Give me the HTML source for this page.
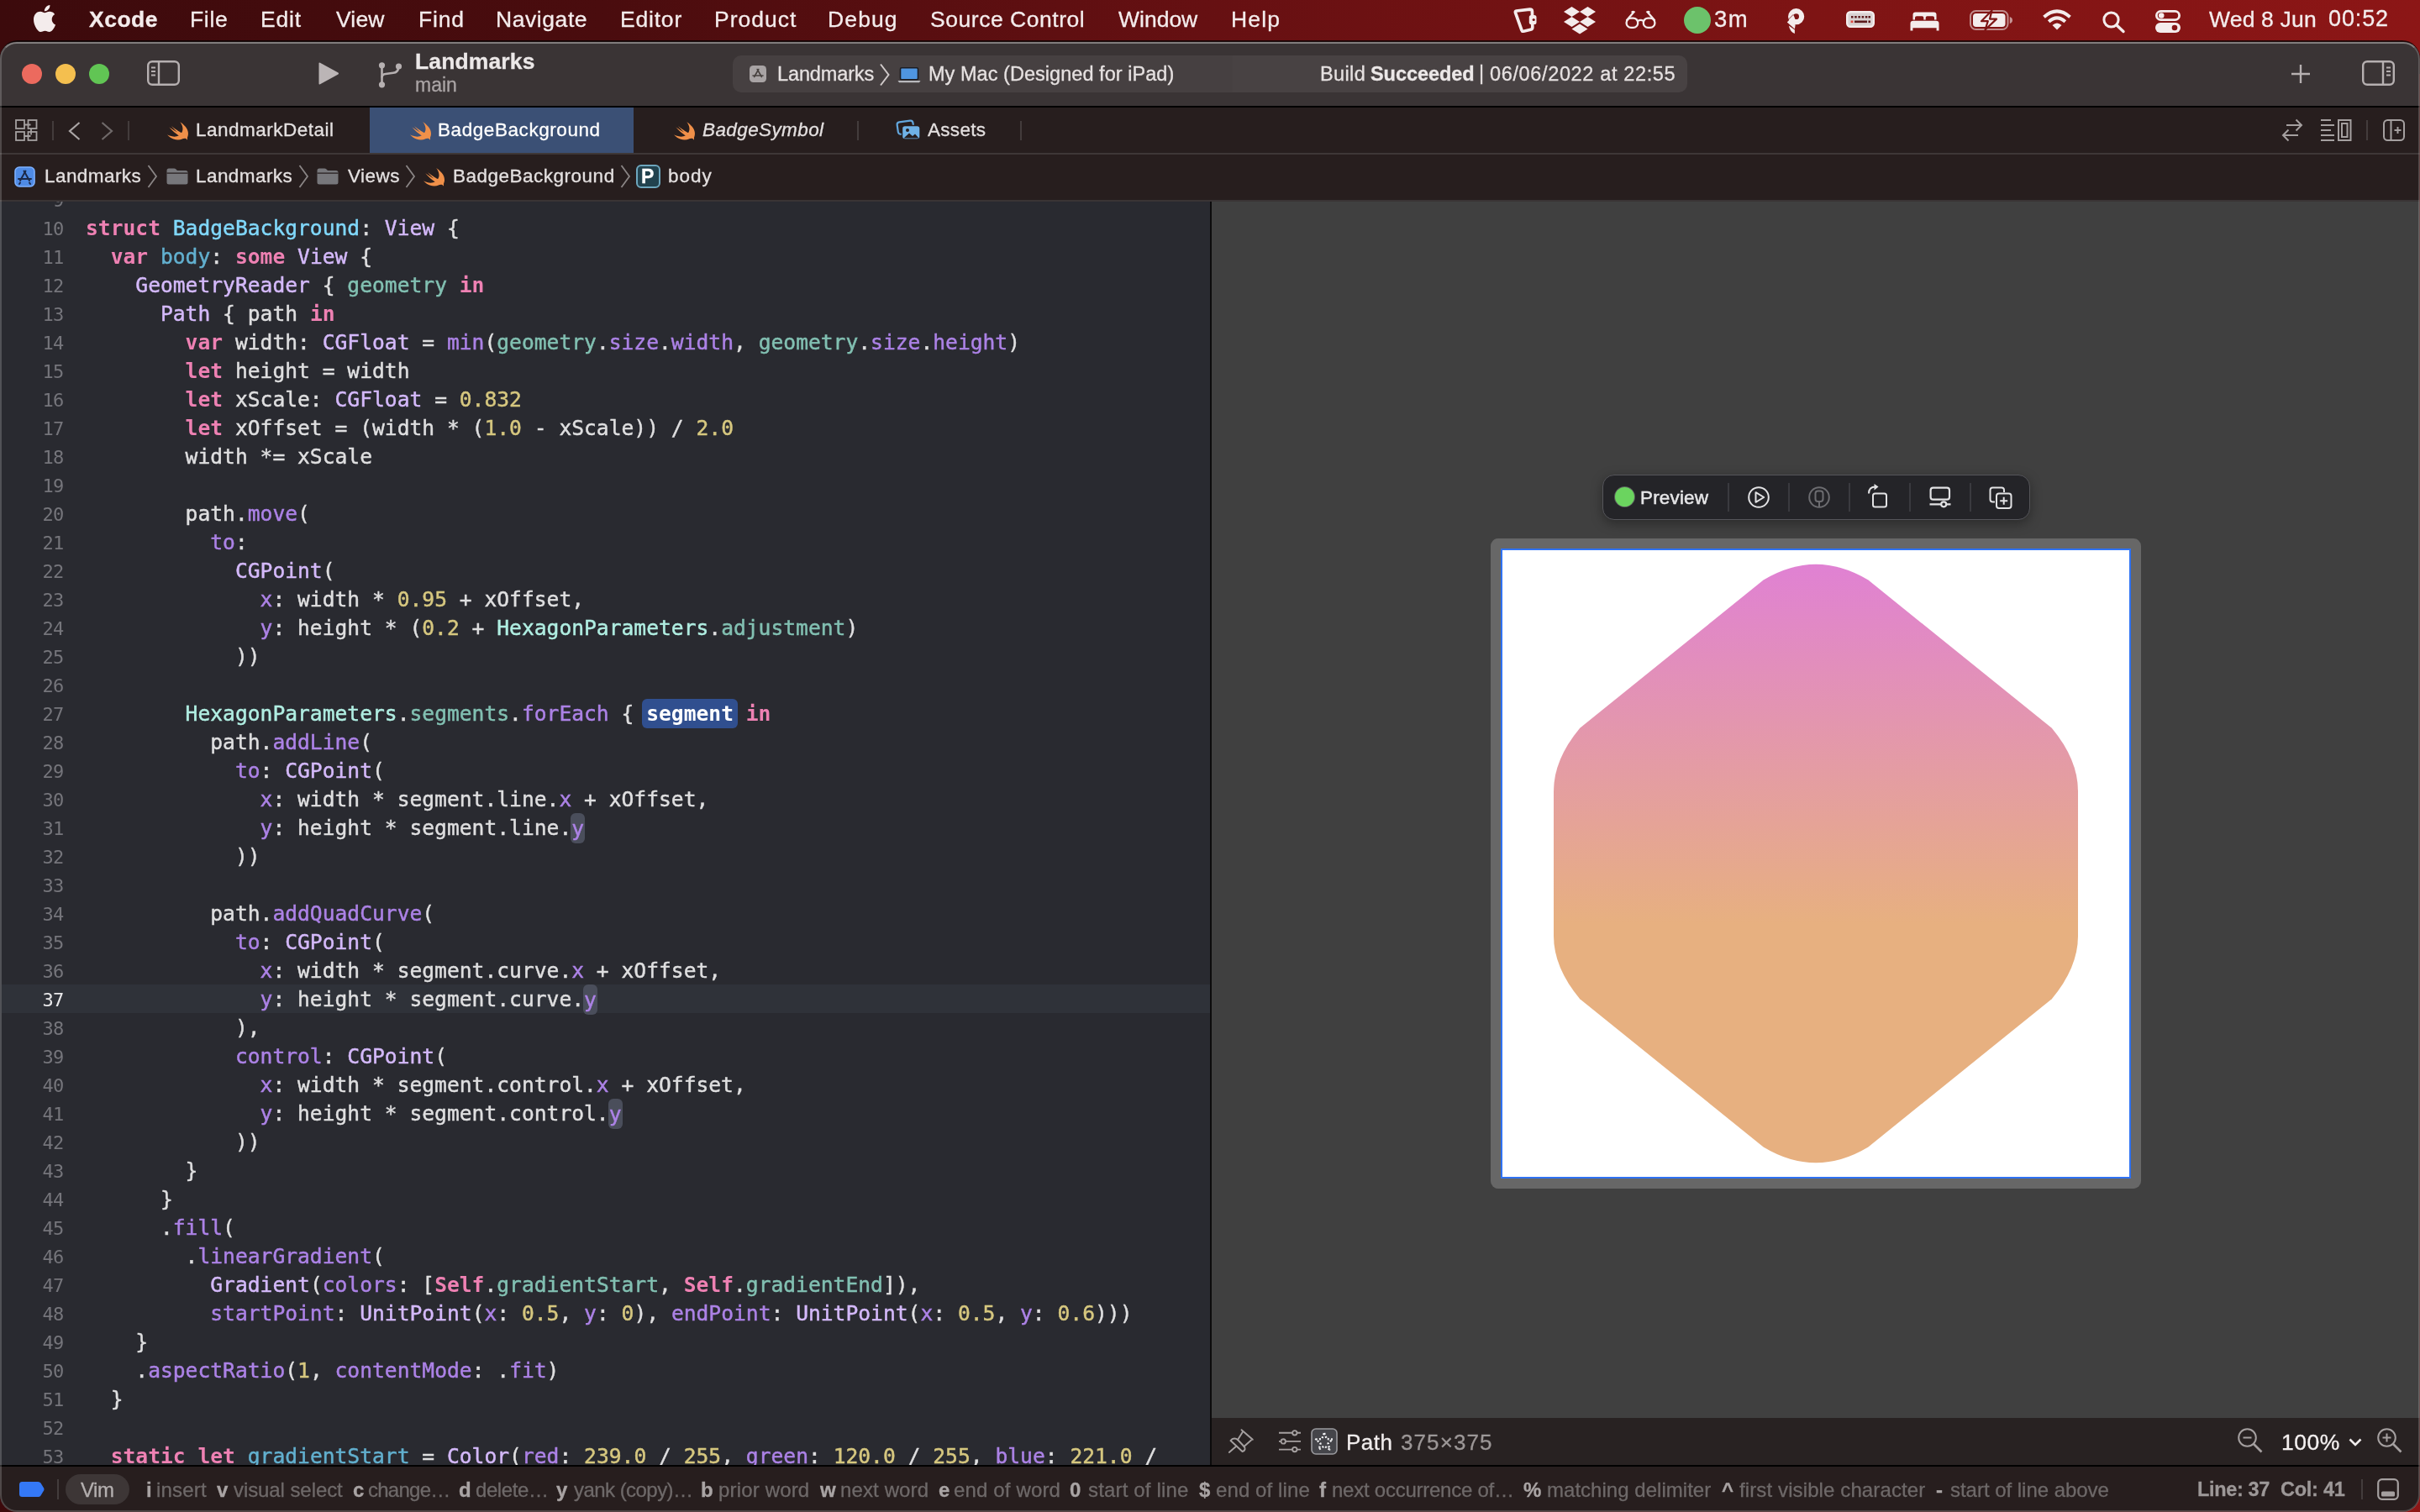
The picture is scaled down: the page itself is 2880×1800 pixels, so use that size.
<!DOCTYPE html>
<html lang="en"><head><meta charset="utf-8"><title>Xcode — BadgeBackground.swift</title>
<style>
html,body{margin:0;padding:0}
body{width:2880px;height:1800px;overflow:hidden;position:relative;font-family:"Liberation Sans", "DejaVu Sans", sans-serif;
 background:linear-gradient(90deg,#3c0a0c 0%,#4a0c0e 25%,#661012 50%,#7e1414 75%,#8c1616 100%);-webkit-font-smoothing:antialiased}
.t{position:absolute;white-space:pre;display:block;will-change:transform;-webkit-text-stroke:0.3px}
.abs{position:absolute}
svg{position:absolute;overflow:visible}
#win{position:absolute;left:0;top:0;width:2880px;height:1800px;clip-path:inset(49.5px 0.5px 0.5px 0px round 20px);background:#271e1e}
#winborder{position:absolute;left:0;top:49.5px;width:2879.5px;height:1750px;border-radius:20px;box-sizing:border-box;border:2px solid rgba(255,255,255,.19);border-top-color:rgba(255,255,255,.36);pointer-events:none}
.code{position:absolute;left:102px;top:254px;font-family:"DejaVu Sans Mono", "Liberation Mono", monospace;font-size:24.63px;line-height:34px;color:#dfdfe0;white-space:pre;-webkit-text-stroke:0.45px;will-change:transform}
.code b{font-weight:700;-webkit-text-stroke:0}
.ln{position:absolute;left:0;width:75.5px;text-align:right;top:254px;font-family:"DejaVu Sans Mono", "Liberation Mono", monospace;font-size:22px;line-height:34px;color:#75757b;white-space:pre;will-change:transform;letter-spacing:-0.7px}
.k{color:#ee81b3}.td{color:#80d8fb}.od{color:#62b0cf}.st{color:#d4b9fa}.sf{color:#ac82e6}.pt{color:#b0eee2}.pp{color:#82c0b2}.n{color:#d6c77f}
</style></head>
<body>
<div id="menubar" class="abs" style="left:0;top:0;width:2880px;height:48px">
<svg style="left:40px;top:6px" width="26" height="32" viewBox="0 0 814 1000"><path fill="#f4ecec" d="M788.1 340.9c-5.8 4.5-108.2 62.2-108.2 190.5 0 148.4 130.3 200.9 134.2 202.200-.6 3.200-20.700 71.900-68.700 141.900-42.800 61.600-87.500 123.100-155.500 123.100s-85.500-39.500-164-39.500c-76.500 0-103.700 40.800-165.900 40.800s-105.600-57-155.500-127C46.700 790.700 0 663 0 541.800c0-194.400 126.400-297.500 250.800-297.500 66.100 0 121.200 43.400 162.700 43.400 39.500 0 101.100-46 176.300-46 28.500 0 130.900 2.600 198.300 99.200zm-234-181.500c31.100-36.900 53.100-88.100 53.100-139.300 0-7.100-.6-14.300-1.900-20.100-50.600 1.900-110.800 33.700-147.100 75.800-28.500 32.400-55.100 83.600-55.100 135.500 0 7.800 1.300 15.600 1.900 18.100 3.200.6 8.400 1.300 13.600 1.300 45.400 0 102.500-30.400 135.500-71.300z"/></svg>
<span id="m_xcode" class="t" style="left:106.0px;top:9.6px;font-size:26.5px;line-height:26.5px;color:#f4ecec;font-weight:700;letter-spacing:0.500px;">Xcode</span>
<span id="m_file" class="t" style="left:226.0px;top:9.6px;font-size:26.5px;line-height:26.5px;color:#f4ecec;font-weight:400;letter-spacing:0.667px;">File</span>
<span id="m_edit" class="t" style="left:310.0px;top:9.6px;font-size:26.5px;line-height:26.5px;color:#f4ecec;font-weight:400;letter-spacing:0.833px;">Edit</span>
<span id="m_view" class="t" style="left:400.0px;top:9.6px;font-size:26.5px;line-height:26.5px;color:#f4ecec;font-weight:400;letter-spacing:0.167px;">View</span>
<span id="m_find" class="t" style="left:498.0px;top:9.6px;font-size:26.5px;line-height:26.5px;color:#f4ecec;font-weight:400;letter-spacing:0.833px;">Find</span>
<span id="m_nav" class="t" style="left:590.0px;top:9.6px;font-size:26.5px;line-height:26.5px;color:#f4ecec;font-weight:400;letter-spacing:0.571px;">Navigate</span>
<span id="m_editor" class="t" style="left:738.0px;top:9.6px;font-size:26.5px;line-height:26.5px;color:#f4ecec;font-weight:400;letter-spacing:0.800px;">Editor</span>
<span id="m_product" class="t" style="left:850.0px;top:9.6px;font-size:26.5px;line-height:26.5px;color:#f4ecec;font-weight:400;letter-spacing:1.000px;">Product</span>
<span id="m_debug" class="t" style="left:985.0px;top:9.6px;font-size:26.5px;line-height:26.5px;color:#f4ecec;font-weight:400;letter-spacing:1.125px;">Debug</span>
<span id="m_sc" class="t" style="left:1107.0px;top:9.6px;font-size:26.5px;line-height:26.5px;color:#f4ecec;font-weight:400;letter-spacing:0.538px;">Source Control</span>
<span id="m_window" class="t" style="left:1331.0px;top:9.6px;font-size:26.5px;line-height:26.5px;color:#f4ecec;font-weight:400;letter-spacing:0.000px;">Window</span>
<span id="m_help" class="t" style="left:1465.0px;top:9.6px;font-size:26.5px;line-height:26.5px;color:#f4ecec;font-weight:400;letter-spacing:1.167px;">Help</span>
<svg style="left:1800px;top:7px" width="30" height="34" viewBox="0 0 30 34"><path fill="none" stroke="#f4ecec" stroke-width="3.700" stroke-linejoin="round" d="M4.600 6 L20.500 4.100 Q23.300 4 23.400 6.500 L23.800 25.500 Q23.800 27.800 21.500 28.300 L13.200 30.200 Q11.500 30.500 10.900 28.800 L3.500 8.200 Q3 6.300 4.600 6Z"/><rect x="19.800" y="11" width="8.700" height="11" rx="2.600" fill="#f4ecec"/><circle cx="25.200" cy="16.500" r="1.600" fill="#761314"/></svg>
<svg style="left:1861px;top:8px" width="38" height="33" viewBox="0 0 38 33"><g fill="#f4ecec"><path d="M9.500 0 L19 6 L9.500 12 L0 6Z"/><path d="M28.500 0 L38 6 L28.500 12 L19 6Z"/><path d="M9.500 12 L19 18 L9.500 24 L0 18Z"/><path d="M28.500 12 L38 18 L28.500 24 L19 18Z"/><path d="M19 20.500 L28.500 26.500 L19 32.500 L9.500 26.500Z"/></g></svg>
<svg style="left:1933px;top:12px" width="38" height="24" viewBox="0 0 38 24"><g fill="none" stroke="#f4ecec" stroke-width="2.300" stroke-linecap="round"><rect x="2.600" y="9.600" width="13.600" height="11.200" rx="5.400"/><rect x="22.800" y="9.600" width="13.600" height="11.200" rx="5.400"/><path d="M16.200 13 Q19.500 10.800 22.800 13"/><path d="M3 12 L11.500 2.200 Q10.500 1.600 9.500 2.300"/><path d="M36 12 L27.500 2.200 Q28.500 1.600 29.500 2.300"/></g></svg>
<div class="abs" style="left:2004px;top:8px;width:32px;height:32px;border-radius:50%;background:#6cc26b"></div>
<span id="m_3m" class="t" style="left:2040.0px;top:8.7px;font-size:27.5px;line-height:27.5px;color:#f4ecec;font-weight:400;letter-spacing:1.500px;">3m</span>
<svg style="left:2126px;top:8px" width="28" height="34" viewBox="0 0 28 34"><circle cx="11.600" cy="11.700" r="6.500" fill="none" stroke="#f4ecec" stroke-width="6.200"/><path fill="#f4ecec" d="M0.800 18.400 L8.600 10.200 L10.500 15 L10.500 22.500 L9.900 26.500Z"/><path fill="#f4ecec" d="M2.800 22.600 L9.900 27.600 L9.900 32 Q4.500 30.500 2.800 22.600Z"/><path d="M8.300 9.200 L1.600 16" stroke="#7a1314" stroke-width="0.800" fill="none"/></svg>
<svg style="left:2197px;top:13px" width="34" height="20" viewBox="0 0 34 20"><rect x="1.200" y="1.200" width="31.600" height="17.600" rx="4" fill="#d9d2d2" stroke="#f4ecec" stroke-width="2.400"/><g fill="#5b1a1c"><rect x="6" y="6" width="2.500" height="2.500"/><rect x="10.200" y="6" width="2.500" height="2.500"/><rect x="14.400" y="6" width="2.500" height="2.500"/><rect x="18.600" y="6" width="2.500" height="2.500"/><rect x="22.800" y="6" width="2.500" height="2.500"/><rect x="26.500" y="6" width="2.500" height="2.500"/><rect x="10" y="11.500" width="15" height="2.600"/><rect x="26.500" y="11.500" width="2.500" height="2.600"/></g><rect x="5.600" y="11.500" width="2.800" height="2.600" fill="#e0483e"/></svg>
<svg style="left:2273px;top:14px" width="35" height="23" viewBox="0 0 35 23"><path fill="#f4ecec" d="M3.500 9.500 L3.500 3.500 Q3.500 0.500 6.500 0.500 L28.500 0.500 Q31.500 0.500 31.500 3.500 L31.500 9.500 L29 9.500 L29 7 Q29 5.200 27 5.200 L20.500 5.200 Q18.700 5.200 18.700 7 L18.700 9.500 L16.300 9.500 L16.300 7 Q16.300 5.200 14.500 5.200 L8 5.200 Q6 5.200 6 7 L6 9.500Z M0.500 22.500 L0.500 14 Q0.500 10.800 4 10.800 L31 10.800 Q34.500 10.800 34.500 14 L34.500 22.500 L31.600 22.500 L31.600 19.300 L3.400 19.300 L3.400 22.500Z"/></svg>
<svg style="left:2344px;top:12px" width="53" height="24" viewBox="0 0 53 24"><rect x="1" y="1" width="44.500" height="22" rx="6.500" fill="none" stroke="#f4ecec" stroke-opacity=".55" stroke-width="2"/><rect x="4" y="4" width="38.500" height="16" rx="3.800" fill="#f4ecec"/><path d="M47.800 8 Q51 9 51 12 Q51 15 47.800 16Z" fill="#f4ecec" fill-opacity=".6"/><path d="M26.500 0.500 L14 13.200 L21.800 13.200 L18.500 23.500 L32 10.600 L24 10.600Z" fill="#f4ecec" stroke="#7d1515" stroke-width="2.200" stroke-linejoin="round"/></svg>
<svg style="left:2430px;top:11px" width="36" height="25" viewBox="0 0 36 25"><g fill="none" stroke="#f4ecec" stroke-width="4" stroke-linecap="butt"><path d="M2.500 9.200 Q18 -4.500 33.500 9.200"/><path d="M8.200 14.800 Q18 6 27.800 14.800"/></g><path d="M18 24.500 L12.500 19 Q18 14 23.500 19Z" fill="#f4ecec"/></svg>
<svg style="left:2502px;top:13px" width="27" height="26" viewBox="0 0 27 26"><circle cx="10.500" cy="10.500" r="8.600" fill="none" stroke="#f4ecec" stroke-width="3"/><path d="M16.800 16.800 L25 24.500" stroke="#f4ecec" stroke-width="3.400" stroke-linecap="round"/></svg>
<svg style="left:2565px;top:12px" width="30" height="27" viewBox="0 0 30 27"><rect x="1.400" y="1.400" width="27.200" height="10.200" rx="5.100" fill="none" stroke="#f4ecec" stroke-width="2.800"/><circle cx="7.200" cy="6.500" r="3.300" fill="#f4ecec"/><rect x="0" y="15" width="30" height="12" rx="6" fill="#f4ecec"/><circle cx="23" cy="21" r="3.300" fill="#861516"/></svg>
<span id="m_date" class="t" style="left:2629.0px;top:9.6px;font-size:26.5px;line-height:26.5px;color:#f4ecec;font-weight:400;letter-spacing:0.188px;">Wed 8 Jun</span>
<span id="m_time" class="t" style="left:2771.0px;top:9.1px;font-size:27px;line-height:27px;color:#f4ecec;font-weight:400;letter-spacing:0.875px;">00:52</span>
</div>
<div id="shadow" class="abs" style="left:0;top:48px;width:2880px;height:40px;background:rgba(0,0,0,.72);border-radius:21px 21px 0 0"></div>
<div id="win">
<div id="toolbar" class="abs" style="left:0;top:50px;width:2880px;height:76px;background:#3a3435"></div>
<div class="abs" style="left:0;top:126px;width:2880px;height:2px;background:#000"></div>
<div class="abs" style="left:26px;top:76px;width:24px;height:24px;border-radius:50%;background:#ec6a5e"></div>
<div class="abs" style="left:66px;top:76px;width:24px;height:24px;border-radius:50%;background:#f4bf4f"></div>
<div class="abs" style="left:106px;top:76px;width:24px;height:24px;border-radius:50%;background:#61c554"></div>
<svg style="left:175px;top:72px" width="39" height="30" viewBox="0 0 39 30"><rect x="1.200" y="1.200" width="36.600" height="27.600" rx="5" fill="none" stroke="#b6b0b1" stroke-width="2.400"/><path d="M14 1.200 V28.800" stroke="#b6b0b1" stroke-width="2.400"/><path d="M5 8.500 H10 M5 13 H10 M5 17.500 H10" stroke="#b6b0b1" stroke-width="1.800"/></svg>
<svg style="left:377px;top:73px" width="28" height="29" viewBox="0 0 28 29"><path d="M2.500 2.500 L2.500 26.500 Q2.500 28 4 27.200 L25.500 15.500 Q26.800 14.500 25.500 13.600 L4 1.800 Q2.500 1 2.500 2.500Z" fill="#bbb5b6"/></svg>
<svg style="left:448.500px;top:72.500px" width="32" height="33" viewBox="0 0 32 33"><g fill="none" stroke="#b6b0b1" stroke-width="2.600"><path d="M5.500 7.500 V25"/><path d="M5.500 19.500 Q5.500 15.500 10 15 L19 13.800 Q24.500 13 25 8.500"/></g><circle cx="5.500" cy="4.800" r="3.600" fill="#b6b0b1"/><circle cx="5.500" cy="27.800" r="3.600" fill="#b6b0b1"/><circle cx="25.500" cy="6" r="3.600" fill="#b6b0b1"/></svg>
<span id="tb_title" class="t" style="left:494.0px;top:59.6px;font-size:26.5px;line-height:26.5px;color:#ece8e8;font-weight:700;letter-spacing:0.125px;">Landmarks</span>
<span id="tb_branch" class="t" style="left:493.5px;top:90.0px;font-size:23px;line-height:23px;color:#aaa4a5;font-weight:400;letter-spacing:0.000px;">main</span>
<div class="abs" style="left:872px;top:66px;width:595px;height:44px;border-radius:10px 0 0 10px;background:#464041"></div>
<div class="abs" style="left:1467px;top:66px;width:541px;height:44px;border-radius:0 10px 10px 0;background:#484243"></div>
<svg style="left:892px;top:78px" width="20" height="20" viewBox="0 0 20 20"><rect width="20" height="20" rx="4.500" fill="#a8a3a4"/><g stroke="#47413f" stroke-width="1.600" stroke-linecap="round" fill="none"><path d="M10.800 4.500 L5.600 13.500"/><path d="M9.200 4.500 L14.400 13.500"/><path d="M4 12 H16"/></g></svg>
<span id="tb_scheme" class="t" style="left:925.0px;top:77.1px;font-size:23.5px;line-height:23.5px;color:#e6e1e1;font-weight:400;letter-spacing:-0.125px;">Landmarks</span>
<svg style="left:1046px;top:75px" width="14" height="28" viewBox="0 0 14 28"><path d="M2 1.500 L11.500 14 L2 26.500" fill="none" stroke="#d0caca" stroke-width="2"/></svg>
<svg style="left:1068px;top:80px" width="28" height="19" viewBox="0 0 28 19"><rect x="3.500" y="0.800" width="21" height="14" rx="1.500" fill="#4f95e0" stroke="#1d1d22" stroke-width="1.600"/><path d="M0.500 16 H27.500 L26 18.200 H2Z" fill="#b9b9bd"/></svg>
<span id="tb_dest" class="t" style="left:1105.0px;top:77.1px;font-size:23.5px;line-height:23.5px;color:#e6e1e1;font-weight:400;letter-spacing:0.040px;">My Mac (Designed for iPad)</span>
<span id="tb_build" class="t" style="left:1571.0px;top:77.1px;font-size:23.5px;line-height:23.5px;color:#e6e1e1;font-weight:400;letter-spacing:0.375px;">Build</span>
<span id="tb_succ" class="t" style="left:1631.0px;top:77.1px;font-size:23.5px;line-height:23.5px;color:#ece8e8;font-weight:700;letter-spacing:-0.062px;">Succeeded</span>
<span id="tb_bar" class="t" style="left:1760.0px;top:76.1px;font-size:23.5px;line-height:23.5px;color:#e6e1e1;font-weight:400;letter-spacing:0.000px;">|</span>
<span id="tb_date" class="t" style="left:1773.0px;top:77.1px;font-size:23.5px;line-height:23.5px;color:#e6e1e1;font-weight:400;letter-spacing:0.639px;">06/06/2022 at 22:55</span>
<svg style="left:2726px;top:76px" width="24" height="24" viewBox="0 0 24 24"><path d="M12 1 V23 M1 12 H23" stroke="#b6b0b1" stroke-width="2.400" fill="none"/></svg>
<svg style="left:2811px;top:72px" width="39" height="30" viewBox="0 0 39 30"><rect x="1.200" y="1.200" width="36.600" height="27.600" rx="5" fill="none" stroke="#b6b0b1" stroke-width="2.400"/><path d="M25 1.200 V28.800" stroke="#b6b0b1" stroke-width="2.400"/><path d="M29 8.500 H34 M29 13 H34 M29 17.500 H34" stroke="#b6b0b1" stroke-width="1.800"/></svg>
<div id="tabbar" class="abs" style="left:0;top:128px;width:2880px;height:54px;background:#271e1e"></div>
<div class="abs" style="left:0;top:182px;width:2880px;height:2px;background:#3e3737"></div>
<div id="jumpbar" class="abs" style="left:0;top:184px;width:2880px;height:54px;background:#271e1e"></div>
<div class="abs" style="left:0;top:238px;width:2880px;height:2px;background:#3a3435"></div>
<div class="abs" style="left:440px;top:128px;width:314px;height:54px;background:#3b5075"></div>
<svg style="left:18px;top:142px" width="27" height="26" viewBox="0 0 27 26"><g fill="none" stroke="#a5a0a0" stroke-width="1.800"><rect x="1" y="1" width="10" height="10"/><rect x="15.500" y="1" width="10" height="10"/><rect x="1" y="15" width="10" height="10"/><rect x="15.500" y="15" width="10" height="10"/><path d="M11 6.500 H18.500 M19 11 V18.500 M11 20 H18.500"/></g></svg>
<div class="abs" style="left:62px;top:144px;width:2px;height:23px;background:#433c3c"></div>
<svg style="left:81px;top:145px" width="15" height="22" viewBox="0 0 15 22"><path d="M13.500 1 L2 11 L13.500 21" fill="none" stroke="#aaa5a5" stroke-width="2.200"/></svg>
<svg style="left:120px;top:145px" width="15" height="22" viewBox="0 0 15 22"><path d="M1.500 1 L13 11 L1.500 21" fill="none" stroke="#6f6969" stroke-width="2.200"/></svg>
<div class="abs" style="left:152px;top:144px;width:2px;height:23px;background:#433c3c"></div>
<svg style="left:199px;top:145px" width="25" height="21.5" viewBox="14.300 6.100 33.800 35.300" preserveAspectRatio="none"><path fill="#f09049" d="M46.600 37.300c2-5.200 3-13.700-3.600-22.600 0 0-.1-.1-.1-.1-3.300-4.500-8-8.500-8-8.500s6.900 10 3.500 19.400c-.3.800-.7 1.600-1.100 2.400-.1-.1-.3-.2-.5-.3 0 0-7.400-4.600-15.400-12.700-.2-.2 4.300 6.400 9.400 11.700-2.400-1.300-9.100-6.200-13.300-10.100.5.900 1.100 1.700 1.800 2.500 3.500 4.500 8.100 10 13.600 14.200-3.900 2.400-9.300 2.600-14.800 0-1.300-.6-2.600-1.400-3.800-2.200 2.300 3.700 5.800 6.800 10.100 8.700 5.100 2.200 10.200 2 14 0 0 0 0 0 .1 0 .2-.1.300-.2.500-.3 1.800-.9 5.400-1.900 7.300 1.900.5.900 1.500-4-1.500-7.700z"/></svg>
<span id="tab1" class="t" style="left:233.0px;top:144.0px;font-size:22.5px;line-height:22.5px;color:#e4e0e0;font-weight:400;letter-spacing:0.500px;">LandmarkDetail</span>
<svg style="left:488px;top:145px" width="25" height="21.5" viewBox="14.300 6.100 33.800 35.300" preserveAspectRatio="none"><path fill="#f09049" d="M46.600 37.300c2-5.200 3-13.700-3.600-22.600 0 0-.1-.1-.1-.1-3.300-4.500-8-8.500-8-8.500s6.900 10 3.500 19.400c-.3.800-.7 1.600-1.100 2.400-.1-.1-.3-.2-.5-.3 0 0-7.400-4.600-15.400-12.700-.2-.2 4.300 6.400 9.400 11.700-2.400-1.300-9.100-6.200-13.300-10.100.5.900 1.100 1.700 1.800 2.500 3.500 4.500 8.100 10 13.600 14.200-3.900 2.400-9.300 2.600-14.800 0-1.300-.6-2.600-1.400-3.800-2.200 2.300 3.700 5.800 6.800 10.100 8.700 5.100 2.200 10.200 2 14 0 0 0 0 0 .1 0 .2-.1.300-.2.500-.3 1.800-.9 5.400-1.900 7.300 1.900.5.900 1.500-4-1.500-7.700z"/></svg>
<span id="tab2" class="t" style="left:521.0px;top:144.0px;font-size:22.5px;line-height:22.5px;color:#ffffff;font-weight:400;letter-spacing:0.571px;">BadgeBackground</span>
<svg style="left:802px;top:145px" width="25" height="21.5" viewBox="14.300 6.100 33.800 35.300" preserveAspectRatio="none"><path fill="#f09049" d="M46.600 37.300c2-5.200 3-13.700-3.600-22.600 0 0-.1-.1-.1-.1-3.300-4.500-8-8.500-8-8.500s6.900 10 3.500 19.400c-.3.800-.7 1.600-1.100 2.400-.1-.1-.3-.2-.5-.3 0 0-7.400-4.600-15.400-12.700-.2-.2 4.300 6.400 9.400 11.700-2.400-1.300-9.100-6.200-13.300-10.100.5.900 1.100 1.700 1.800 2.500 3.500 4.500 8.100 10 13.600 14.200-3.900 2.400-9.300 2.600-14.800 0-1.300-.6-2.600-1.400-3.800-2.200 2.300 3.700 5.800 6.800 10.100 8.700 5.100 2.200 10.200 2 14 0 0 0 0 0 .1 0 .2-.1.300-.2.500-.3 1.800-.9 5.400-1.900 7.300 1.900.5.900 1.500-4-1.500-7.700z"/></svg>
<span id="tab3" class="t" style="left:836.0px;top:144.0px;font-size:22.5px;line-height:22.5px;color:#e4e0e0;font-weight:400;letter-spacing:0.400px;font-style:italic;">BadgeSymbol</span>
<div class="abs" style="left:1020px;top:144px;width:2px;height:23px;background:#433c3c"></div>
<svg style="left:1067px;top:142px" width="29" height="25" viewBox="0 0 29 25"><rect x="1.200" y="2.500" width="19" height="14.500" rx="3" transform="rotate(-8 10 10)" fill="none" stroke="#62a6dc" stroke-width="2.200"/><rect x="6.500" y="7.500" width="21.500" height="16.500" rx="3.500" fill="#6fb2e6" stroke="#271e1e" stroke-width="1.400"/><circle cx="13" cy="13" r="2" fill="#271e1e"/><path d="M8.500 22.500 L15 16.500 L19 20 L22 17.500 L26.500 22.500Z" fill="#271e1e"/></svg>
<span id="tab4" class="t" style="left:1104.0px;top:144.0px;font-size:22.5px;line-height:22.5px;color:#e4e0e0;font-weight:400;letter-spacing:0.300px;">Assets</span>
<div class="abs" style="left:1214px;top:144px;width:2px;height:23px;background:#433c3c"></div>
<svg style="left:2715px;top:141px" width="26" height="28" viewBox="0 0 26 28"><g fill="none" stroke="#a5a0a0" stroke-width="2"><path d="M6 8 H24 M17.500 1.500 L24 8 L17.500 14.500"/><path d="M20 20 H2 M8.500 13.500 L2 20 L8.500 26.500"/></g></svg>
<svg style="left:2761px;top:141px" width="38" height="28" viewBox="0 0 38 28"><g fill="none" stroke="#a5a0a0" stroke-width="2"><path d="M1 2 H13 M1 8 H17 M1 14 H13 M1 20 H17 M1 26 H17"/><rect x="22" y="2" width="14.500" height="24"/><rect x="26" y="6" width="6.500" height="16"/></g></svg>
<div class="abs" style="left:2816px;top:143px;width:2px;height:24px;background:#433c3c"></div>
<svg style="left:2836px;top:142px" width="26" height="26" viewBox="0 0 26 26"><g fill="none" stroke="#a5a0a0" stroke-width="2"><rect x="1" y="1" width="24" height="24" rx="4.500"/><path d="M9.500 1 V25 M13.500 13 H21.500 M17.500 9 V17"/></g></svg>
<svg style="left:17px;top:198px" width="25" height="25" viewBox="0 0 25 25"><rect x="1" y="1" width="23" height="23" rx="5" fill="#4f8be6" stroke="#7db1ff" stroke-width="1.600"/><g stroke="#1c2a4a" stroke-width="2" stroke-linecap="round" fill="none"><path d="M13.500 5.500 L7 17"/><path d="M11.500 5.500 L18 17"/><path d="M5 15 H20"/><path d="M7 19.500 L6 21 M18 19.500 L19 21"/></g></svg>
<span id="jb1" class="t" style="left:53.0px;top:199.0px;font-size:22.5px;line-height:22.5px;color:#e4e0e0;font-weight:400;letter-spacing:0.438px;">Landmarks</span>
<svg style="left:175px;top:196px" width="13" height="28" viewBox="0 0 13 28"><path d="M1.500 1 L11 14 L1.500 27" fill="none" stroke="#8a8585" stroke-width="1.800"/></svg>
<svg style="left:197.5px;top:200px" width="26" height="20" viewBox="0 0 26 20"><path d="M0.500 3 Q0.500 0.500 3 0.500 L9 0.500 Q10.500 0.500 11.500 1.500 L13 3 L23 3 Q25.500 3 25.500 5.500 L25.500 17 Q25.500 19.500 23 19.500 L3 19.500 Q0.500 19.500 0.500 17Z" fill="#77777b"/><path d="M0.500 6.200 H25.500" stroke="#271e1e" stroke-width="1.200"/></svg>
<span id="jb2" class="t" style="left:233.0px;top:199.0px;font-size:22.5px;line-height:22.5px;color:#e4e0e0;font-weight:400;letter-spacing:0.438px;">Landmarks</span>
<svg style="left:354.5px;top:196px" width="13" height="28" viewBox="0 0 13 28"><path d="M1.500 1 L11 14 L1.500 27" fill="none" stroke="#8a8585" stroke-width="1.800"/></svg>
<svg style="left:377px;top:200px" width="26" height="20" viewBox="0 0 26 20"><path d="M0.500 3 Q0.500 0.500 3 0.500 L9 0.500 Q10.500 0.500 11.500 1.500 L13 3 L23 3 Q25.500 3 25.500 5.500 L25.500 17 Q25.500 19.500 23 19.500 L3 19.500 Q0.500 19.500 0.500 17Z" fill="#77777b"/><path d="M0.500 6.200 H25.500" stroke="#271e1e" stroke-width="1.200"/></svg>
<span id="jb3" class="t" style="left:414.0px;top:199.0px;font-size:22.5px;line-height:22.5px;color:#e4e0e0;font-weight:400;letter-spacing:0.500px;">Views</span>
<svg style="left:482px;top:196px" width="13" height="28" viewBox="0 0 13 28"><path d="M1.500 1 L11 14 L1.500 27" fill="none" stroke="#8a8585" stroke-width="1.800"/></svg>
<svg style="left:504px;top:200px" width="25" height="21.5" viewBox="14.300 6.100 33.800 35.300" preserveAspectRatio="none"><path fill="#f09049" d="M46.600 37.300c2-5.200 3-13.700-3.600-22.600 0 0-.1-.1-.1-.1-3.300-4.500-8-8.500-8-8.500s6.900 10 3.500 19.400c-.3.800-.7 1.600-1.100 2.400-.1-.1-.3-.2-.5-.3 0 0-7.400-4.600-15.400-12.700-.2-.2 4.300 6.400 9.400 11.700-2.400-1.300-9.100-6.200-13.300-10.100.5.900 1.100 1.700 1.800 2.500 3.500 4.500 8.100 10 13.600 14.200-3.900 2.400-9.300 2.600-14.800 0-1.300-.6-2.600-1.400-3.800-2.200 2.300 3.700 5.800 6.800 10.100 8.700 5.100 2.200 10.200 2 14 0 0 0 0 0 .1 0 .2-.1.300-.2.500-.3 1.800-.9 5.400-1.900 7.300 1.900.5.900 1.500-4-1.500-7.700z"/></svg>
<span id="jb4" class="t" style="left:539.0px;top:199.0px;font-size:22.5px;line-height:22.5px;color:#e4e0e0;font-weight:400;letter-spacing:0.500px;">BadgeBackground</span>
<svg style="left:737.5px;top:196px" width="13" height="28" viewBox="0 0 13 28"><path d="M1.500 1 L11 14 L1.500 27" fill="none" stroke="#8a8585" stroke-width="1.800"/></svg>
<div class="abs" style="left:757px;top:196px;width:29px;height:28px;box-sizing:border-box;border-radius:6px;background:#22424e;border:2px solid #6ea7be"></div>
<span id="jbP" class="t" style="left:763.0px;top:199.0px;font-size:23px;line-height:23px;color:#ffffff;font-weight:700;letter-spacing:0.000px;">P</span>
<span id="jb5" class="t" style="left:795.0px;top:199.0px;font-size:22.5px;line-height:22.5px;color:#e4e0e0;font-weight:400;letter-spacing:1.000px;">body</span>
<div id="editor" class="abs" style="left:0;top:240px;width:1440px;height:1503.500px;background:#292a30;overflow:hidden">
<div class="abs" style="left:2px;top:932px;width:1438px;height:34px;background:#2f3239"></div>
<div class="ln" style="top:-18px">9
10
11
12
13
14
15
16
17
18
19
20
21
22
23
24
25
26
27
28
29
30
31
32
33
34
35
36
<span style="color:#e8e8ea">37</span>
38
39
40
41
42
43
44
45
46
47
48
49
50
51
52
53</div>
<div class="code" style="top:-19px">
<b class="k">struct</b> <span class="td">BadgeBackground</span>: <span class="st">View</span> {
  <b class="k">var</b> <span class="od">body</span>: <b class="k">some</b> <span class="st">View</span> {
    <span class="st">GeometryReader</span> { <span class="pp">geometry</span> <b class="k">in</b>
      <span class="st">Path</span> { path <b class="k">in</b>
        <b class="k">var</b> width: <span class="st">CGFloat</span> = <span class="sf">min</span>(<span class="pp">geometry</span>.<span class="sf">size</span>.<span class="sf">width</span>, <span class="pp">geometry</span>.<span class="sf">size</span>.<span class="sf">height</span>)
        <b class="k">let</b> height = width
        <b class="k">let</b> xScale: <span class="st">CGFloat</span> = <span class="n">0.832</span>
        <b class="k">let</b> xOffset = (width * (<span class="n">1.0</span> - xScale)) / <span class="n">2.0</span>
        width *= xScale

        path.<span class="sf">move</span>(
          <span class="sf">to</span>:
            <span class="st">CGPoint</span>(
              <span class="sf">x</span>: width * <span class="n">0.95</span> + xOffset,
              <span class="sf">y</span>: height * (<span class="n">0.2</span> + <span class="pt">HexagonParameters</span>.<span class="pp">adjustment</span>)
            ))

        <span class="pt">HexagonParameters</span>.<span class="pp">segments</span>.<span class="sf">forEach</span> { <b style="color:#fff;background:#304f8f;border-radius:6px;padding:3px 5px;margin:0 -5px">segment</b> <b class="k">in</b>
          path.<span class="sf">addLine</span>(
            <span class="sf">to</span>: <span class="st">CGPoint</span>(
              <span class="sf">x</span>: width * segment.line.<span class="sf">x</span> + xOffset,
              <span class="sf">y</span>: height * segment.line.<span class="sf" style="background:#4a4e5b;border-radius:6px;padding:3.500px 1.200px;margin:0 -1.200px">y</span>
            ))

          path.<span class="sf">addQuadCurve</span>(
            <span class="sf">to</span>: <span class="st">CGPoint</span>(
              <span class="sf">x</span>: width * segment.curve.<span class="sf">x</span> + xOffset,
              <span class="sf">y</span>: height * segment.curve.<span class="sf" style="background:#4a4e5b;border-radius:6px;padding:3.500px 1.200px;margin:0 -1.200px">y</span>
            ),
            <span class="sf">control</span>: <span class="st">CGPoint</span>(
              <span class="sf">x</span>: width * segment.control.<span class="sf">x</span> + xOffset,
              <span class="sf">y</span>: height * segment.control.<span class="sf" style="background:#4a4e5b;border-radius:6px;padding:3.500px 1.200px;margin:0 -1.200px">y</span>
            ))
        }
      }
      .<span class="sf">fill</span>(
        .<span class="sf">linearGradient</span>(
          <span class="st">Gradient</span>(<span class="sf">colors</span>: [<b class="k">Self</b>.<span class="pp">gradientStart</span>, <b class="k">Self</b>.<span class="pp">gradientEnd</span>]),
          <span class="sf">startPoint</span>: <span class="st">UnitPoint</span>(<span class="sf">x</span>: <span class="n">0.5</span>, <span class="sf">y</span>: <span class="n">0</span>), <span class="sf">endPoint</span>: <span class="st">UnitPoint</span>(<span class="sf">x</span>: <span class="n">0.5</span>, <span class="sf">y</span>: <span class="n">0.6</span>)))
    }
    .<span class="sf">aspectRatio</span>(<span class="n">1</span>, <span class="sf">contentMode</span>: .<span class="sf">fit</span>)
  }

  <b class="k">static</b> <b class="k">let</b> <span class="od">gradientStart</span> = <span class="st">Color</span>(<span class="sf">red</span>: <span class="n">239.0</span> / <span class="n">255</span>, <span class="sf">green</span>: <span class="n">120.0</span> / <span class="n">255</span>, <span class="sf">blue</span>: <span class="n">221.0</span> /</div>
</div>
<div class="abs" style="left:1440px;top:240px;width:2px;height:1504px;background:#0c0b0c"></div>
<div id="canvas" class="abs" style="left:1442px;top:240px;width:1438px;height:1448px;background:#404040"></div>
<div class="abs" style="left:1907px;top:565px;width:509px;height:54px;box-sizing:border-box;border-radius:14px;background:#242428;border:1.500px solid #55555a;box-shadow:0 4px 14px rgba(0,0,0,.35)"></div>
<div class="abs" style="left:1922px;top:580px;width:23px;height:23px;border-radius:50%;background:#6bd45f;box-shadow:0 0 0 1px rgba(255,255,255,.25)"></div>
<span id="pv_label" class="t" style="left:1952.0px;top:582.0px;font-size:22.5px;line-height:22.5px;color:#e6e6e8;font-weight:500;letter-spacing:0.167px;-webkit-text-stroke:0.5px #e6e6e8;">Preview</span>
<div class="abs" style="left:2056px;top:575px;width:2px;height:34px;background:#3a3a3f"></div>
<div class="abs" style="left:2128px;top:575px;width:2px;height:34px;background:#3a3a3f"></div>
<div class="abs" style="left:2200px;top:575px;width:2px;height:34px;background:#3a3a3f"></div>
<div class="abs" style="left:2272px;top:575px;width:2px;height:34px;background:#3a3a3f"></div>
<div class="abs" style="left:2344px;top:575px;width:2px;height:34px;background:#3a3a3f"></div>
<svg style="left:2080px;top:579px" width="26" height="26" viewBox="0 0 26 26"><circle cx="13" cy="13" r="11.800" fill="none" stroke="#e2e2e4" stroke-width="2"/><path d="M9.500 7.200 L19.200 13 L9.500 18.800Z" fill="none" stroke="#e2e2e4" stroke-width="2" stroke-linejoin="round"/></svg>
<svg style="left:2152px;top:579px" width="26" height="26" viewBox="0 0 26 26"><g fill="none" stroke="#6c6c70" stroke-width="2"><circle cx="13" cy="13" r="11.800"/><rect x="8.500" y="5.500" width="9" height="12.500" rx="3"/><path d="M13 18 V24.500"/></g></svg>
<svg style="left:2222px;top:576px" width="25" height="29" viewBox="0 0 25 29"><g fill="none" stroke="#e2e2e4" stroke-width="2"><rect x="7" y="11.500" width="16" height="16" rx="2.500"/><path d="M2 11.500 Q2 3.500 10 3.500"/></g><path d="M8.500 0 L13.500 3.600 L8.500 7.400Z" fill="#e2e2e4"/></svg>
<svg style="left:2295px;top:579px" width="28" height="26" viewBox="0 0 28 26"><g fill="none" stroke="#e2e2e4" stroke-width="2.200"><rect x="2.600" y="1.700" width="22.400" height="14" rx="3"/><path d="M1.500 21.300 H15 M21.400 21.300 H26.500"/><circle cx="18.200" cy="21.300" r="3"/></g></svg>
<svg style="left:2367px;top:579px" width="28" height="27" viewBox="0 0 28 27"><g fill="none" stroke="#e2e2e4" stroke-width="2"><path d="M7 18.500 H4.500 Q1.500 18.500 1.500 15.500 V4.500 Q1.500 1.500 4.500 1.500 H15 Q18 1.500 18 4.500 V7"/><rect x="9" y="8.500" width="17.500" height="17.500" rx="3"/><path d="M17.700 12.800 V21.800 M13.200 17.300 H22.200"/></g></svg>
<div class="abs" style="left:1774px;top:641px;width:774px;height:774px;border-radius:9px;background:#676767"></div>
<div class="abs" style="left:1786px;top:653px;width:750px;height:750px;box-sizing:border-box;background:#fff;border:2px solid #2f72f3"></div>
<svg style="left:1786px;top:653px" width="750" height="750" viewBox="0 0 750 750"><defs><linearGradient id="hexg" gradientUnits="userSpaceOnUse" x1="375" y1="18.750" x2="375" y2="446"><stop offset="0" stop-color="#e081d3"/><stop offset="1" stop-color="#e7b080"/></linearGradient></defs><path d="M655.80 213.75 L437.40 37.50 Q375.00 0.00 312.60 37.50 L94.20 213.75 Q63.00 251.25 63.00 288.75 L63.00 461.25 Q63.00 498.75 94.20 536.25 L312.60 712.50 Q375.00 750.00 437.40 712.50 L655.80 536.25 Q687.00 498.75 687.00 461.25 L687.00 288.75 Q687.00 251.25 655.80 213.75Z" fill="url(#hexg)"/></svg>
<div id="canvasbar" class="abs" style="left:1442px;top:1688px;width:1438px;height:55.500px;background:#282222"></div>
<svg style="left:1461px;top:1701px" width="31" height="30" viewBox="0 0 31 30"><g fill="none" stroke="#a5a0a0" stroke-width="1.900" stroke-linejoin="round" stroke-linecap="round"><path d="M3.500 14 C6 10.500 10 11 12 13 L19.500 21 C21.500 23 21 26 17.500 27Z"/><path d="M12 13 L18 3.500 M19.500 21 L28 13.500"/><path d="M16.500 1.200 L29.800 12.800"/><path d="M10.500 20.500 L1.800 28"/></g></svg>
<svg style="left:1522px;top:1702px" width="26" height="27" viewBox="0 0 26 27"><g fill="none" stroke="#a5a0a0" stroke-width="1.900"><path d="M0 3.800 H16 M21.600 3.800 H26 M0 13.900 H2.400 M8 13.900 H26 M0 23.600 H16 M21.600 23.600 H26"/><circle cx="18.800" cy="3.800" r="2.700"/><circle cx="5.200" cy="13.900" r="2.700"/><circle cx="18.800" cy="23.600" r="2.700"/></g></svg>
<svg style="left:1560px;top:1700px" width="32" height="32" viewBox="0 0 32 32"><rect x="1" y="1" width="30" height="30" rx="5" fill="#45454a" stroke="#9a9a9e" stroke-width="1.600"/><path d="M16 6 L18.900 13 L26 13.500 L20.500 18.300 L22.300 25.500 L16 21.500 L9.700 25.500 L11.500 18.300 L6 13.500 L13.100 13Z" fill="none" stroke="#f2f2f4" stroke-width="2.400" stroke-dasharray="2 2.200" stroke-linejoin="round"/></svg>
<span id="cv_path" class="t" style="left:1601.5px;top:1704.0px;font-size:26px;line-height:26px;color:#f0ecec;font-weight:400;letter-spacing:0.500px;">Path</span>
<span id="cv_size" class="t" style="left:1667.0px;top:1704.0px;font-size:26px;line-height:26px;color:#9c9797;font-weight:400;letter-spacing:1.083px;">375×375</span>
<svg style="left:2663px;top:1700px" width="30" height="30" viewBox="0 0 30 30"><g fill="none" stroke="#a5a0a0" stroke-width="2"><circle cx="11.500" cy="11.500" r="10.300"/><path d="M19 19 L28.500 28.500" stroke-width="2.600"/><path d="M6.500 11.500 H16.500"/></g></svg>
<span id="cv_zoom" class="t" style="left:2715.0px;top:1703.6px;font-size:26.5px;line-height:26.5px;color:#f4f0f0;font-weight:400;letter-spacing:0.500px;">100%</span>
<svg style="left:2795px;top:1712px" width="16" height="10" viewBox="0 0 16 10"><path d="M1.500 1.500 L8 8 L14.500 1.500" fill="none" stroke="#f0ecec" stroke-width="2.600"/></svg>
<svg style="left:2829px;top:1700px" width="30" height="30" viewBox="0 0 30 30"><g fill="none" stroke="#a5a0a0" stroke-width="2"><circle cx="11.500" cy="11.500" r="10.300"/><path d="M19 19 L28.500 28.500" stroke-width="2.600"/><path d="M6.500 11.500 H16.500"/><path d="M11.500 6.500 V16.500"/></g></svg>
<div class="abs" style="left:0;top:1743.500px;width:2880px;height:2px;background:#000"></div>
<div id="statusbar" class="abs" style="left:0;top:1745.500px;width:2880px;height:54.500px;background:#271e1e"></div>
<svg style="left:23px;top:1764px" width="29.500" height="18" preserveAspectRatio="none" viewBox="0 0 31 18"><path d="M3.500 0 H23.500 Q25.500 0 26.800 1.600 L30.600 7.500 Q31.400 9 30.600 10.500 L26.800 16.400 Q25.500 18 23.500 18 H3.500 Q0 18 0 14.500 V3.500 Q0 0 3.500 0Z" fill="#3478f6"/></svg>
<div class="abs" style="left:68px;top:1761px;width:2px;height:24px;background:#433c3c"></div>
<div class="abs" style="left:78px;top:1755px;width:76px;height:36px;border-radius:18px;background:#3d3636"></div>
<span id="s_vim" class="t" style="left:96.0px;top:1761.7px;font-size:24px;line-height:24px;color:#b4afaf;font-weight:400;letter-spacing:-0.500px;">Vim</span>
<span id="sk0" class="t" style="left:173.5px;top:1761.7px;font-size:24px;line-height:24px;color:#a9a4a4;font-weight:700;letter-spacing:0.000px;">i</span>
<span id="sd0" class="t" style="left:186.0px;top:1761.7px;font-size:24px;line-height:24px;color:#6e6969;font-weight:400;letter-spacing:0.200px;">insert</span>
<span id="sk1" class="t" style="left:258.0px;top:1761.7px;font-size:24px;line-height:24px;color:#a9a4a4;font-weight:700;letter-spacing:0.000px;">v</span>
<span id="sd1" class="t" style="left:278.0px;top:1761.7px;font-size:24px;line-height:24px;color:#6e6969;font-weight:400;letter-spacing:-0.083px;">visual select</span>
<span id="sk2" class="t" style="left:420.0px;top:1761.7px;font-size:24px;line-height:24px;color:#a9a4a4;font-weight:700;letter-spacing:0.000px;">c</span>
<span id="sd2" class="t" style="left:438.0px;top:1761.7px;font-size:24px;line-height:24px;color:#6e6969;font-weight:400;letter-spacing:-0.750px;">change…</span>
<span id="sk3" class="t" style="left:546.0px;top:1761.7px;font-size:24px;line-height:24px;color:#a9a4a4;font-weight:700;letter-spacing:0.000px;">d</span>
<span id="sd3" class="t" style="left:566.0px;top:1761.7px;font-size:24px;line-height:24px;color:#6e6969;font-weight:400;letter-spacing:-0.417px;">delete…</span>
<span id="sk4" class="t" style="left:662.0px;top:1761.7px;font-size:24px;line-height:24px;color:#a9a4a4;font-weight:700;letter-spacing:0.000px;">y</span>
<span id="sd4" class="t" style="left:683.0px;top:1761.7px;font-size:24px;line-height:24px;color:#6e6969;font-weight:400;letter-spacing:-0.545px;">yank (copy)…</span>
<span id="sk5" class="t" style="left:834.0px;top:1761.7px;font-size:24px;line-height:24px;color:#a9a4a4;font-weight:700;letter-spacing:0.000px;">b</span>
<span id="sd5" class="t" style="left:855.0px;top:1761.7px;font-size:24px;line-height:24px;color:#6e6969;font-weight:400;letter-spacing:0.167px;">prior word</span>
<span id="sk6" class="t" style="left:976.0px;top:1761.7px;font-size:24px;line-height:24px;color:#a9a4a4;font-weight:700;letter-spacing:0.000px;">w</span>
<span id="sd6" class="t" style="left:1000.0px;top:1761.7px;font-size:24px;line-height:24px;color:#6e6969;font-weight:400;letter-spacing:0.125px;">next word</span>
<span id="sk7" class="t" style="left:1117.0px;top:1761.7px;font-size:24px;line-height:24px;color:#a9a4a4;font-weight:700;letter-spacing:0.000px;">e</span>
<span id="sd7" class="t" style="left:1135.0px;top:1761.7px;font-size:24px;line-height:24px;color:#6e6969;font-weight:400;letter-spacing:0.150px;">end of word</span>
<span id="sk8" class="t" style="left:1273.0px;top:1761.7px;font-size:24px;line-height:24px;color:#a9a4a4;font-weight:700;letter-spacing:0.000px;">0</span>
<span id="sd8" class="t" style="left:1295.0px;top:1761.7px;font-size:24px;line-height:24px;color:#6e6969;font-weight:400;letter-spacing:0.167px;">start of line</span>
<span id="sk9" class="t" style="left:1427.0px;top:1761.7px;font-size:24px;line-height:24px;color:#a9a4a4;font-weight:700;letter-spacing:0.000px;">$</span>
<span id="sd9" class="t" style="left:1447.0px;top:1761.7px;font-size:24px;line-height:24px;color:#6e6969;font-weight:400;letter-spacing:0.100px;">end of line</span>
<span id="sk10" class="t" style="left:1570.0px;top:1761.7px;font-size:24px;line-height:24px;color:#a9a4a4;font-weight:700;letter-spacing:0.000px;">f</span>
<span id="sd10" class="t" style="left:1585.0px;top:1761.7px;font-size:24px;line-height:24px;color:#6e6969;font-weight:400;letter-spacing:-0.250px;">next occurrence of…</span>
<span id="sk11" class="t" style="left:1813.0px;top:1761.7px;font-size:24px;line-height:24px;color:#a9a4a4;font-weight:700;letter-spacing:0.000px;">%</span>
<span id="sd11" class="t" style="left:1841.0px;top:1761.7px;font-size:24px;line-height:24px;color:#6e6969;font-weight:400;letter-spacing:0.029px;">matching delimiter</span>
<span id="sk12" class="t" style="left:2049.0px;top:1761.7px;font-size:24px;line-height:24px;color:#a9a4a4;font-weight:700;letter-spacing:0.000px;">^</span>
<span id="sd12" class="t" style="left:2070.0px;top:1761.7px;font-size:24px;line-height:24px;color:#6e6969;font-weight:400;letter-spacing:0.114px;">first visible character</span>
<span id="sk13" class="t" style="left:2304.0px;top:1761.7px;font-size:24px;line-height:24px;color:#a9a4a4;font-weight:700;letter-spacing:0.000px;">-</span>
<span id="sd13" class="t" style="left:2321.0px;top:1761.7px;font-size:24px;line-height:24px;color:#6e6969;font-weight:400;letter-spacing:-0.028px;">start of line above</span>
<span id="s_line" class="t" style="left:2615.0px;top:1762.1px;font-size:23.5px;line-height:23.5px;color:#9d9898;font-weight:700;letter-spacing:-0.357px;">Line: 37</span>
<span id="s_col" class="t" style="left:2714.0px;top:1762.1px;font-size:23.5px;line-height:23.5px;color:#9d9898;font-weight:700;letter-spacing:-0.250px;">Col: 41</span>
<div class="abs" style="left:2810px;top:1761px;width:2px;height:24px;background:#433c3c"></div>
<svg style="left:2829px;top:1760px" width="26" height="26" viewBox="0 0 26 26"><rect x="1.200" y="1.200" width="23.600" height="23.600" rx="4.500" fill="none" stroke="#a5a0a0" stroke-width="2.200"/><rect x="5" y="15.500" width="16" height="6" rx="1.500" fill="#a5a0a0"/></svg>
</div>
<div id="winborder"></div>
</body></html>
